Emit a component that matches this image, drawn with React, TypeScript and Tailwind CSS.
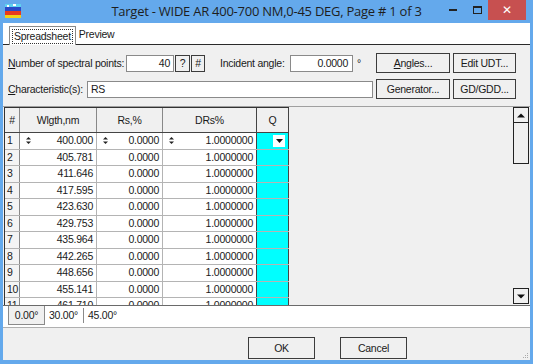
import { ReactNode } from "react";

const rows = [
  "400.000", "405.781", "411.646", "417.595", "423.630", "429.753",
  "435.964", "442.265", "448.656", "455.141", "461.710",
];

function Btn({ children, className = "" }: { children: ReactNode; className?: string }) {
  return (
    <div className={`h-[20px] flex items-center justify-center border border-[#3c3c3c] bg-[#f0f0f0] text-[#1a1a1a] whitespace-nowrap ${className}`}>
      {children}
    </div>
  );
}

function Spin() {
  return (
    <svg width="5" height="9" viewBox="0 0 5 9" className="shrink-0">
      <path d="M0 3.5 L2.5 1 L5 3.5 Z" fill="#222" />
      <path d="M0 5.5 L2.5 8 L5 5.5 Z" fill="#222" />
    </svg>
  );
}

function Arrow({ up }: { up?: boolean }) {
  return (
    <svg width="8" height="5" viewBox="0 0 8 5">
      <path d={up ? "M0 4.5 L4 0.5 L8 4.5 Z" : "M0 0.5 L4 4.5 L8 0.5 Z"} fill="#111" />
    </svg>
  );
}

export default function App() {
  return (
    <div className="w-[533px] h-[364px] bg-[#64a9ec] flex flex-col px-[3px] pb-[4px] font-['Liberation_Sans',Arial,sans-serif] text-[10.5px] tracking-[-0.25px] leading-[13px] text-[#1a1a1a] overflow-hidden">
      {/* title bar */}
      <div className="h-[23px] flex items-center relative shrink-0">
        <svg width="16" height="14" viewBox="0 0 16 14" className="ml-[2px] mt-[-2px]">
          <rect x="0" y="0" width="16" height="3" fill="#5fd0f0" />
          <rect x="2" y="1" width="2" height="2" fill="#fff" />
          <rect x="8" y="0" width="3" height="2" fill="#fff" />
          <rect x="0" y="3" width="16" height="4" fill="#2a49c8" />
          <rect x="0" y="7" width="16" height="4" fill="#e83a1e" />
          <rect x="0" y="11" width="16" height="3" fill="#f2d21a" />
        </svg>
        <div className="absolute left-0 right-0 top-[2px] text-center font-['Open_Sans',sans-serif] text-[13px] tracking-[-0.25px] text-[#1e1e1e] leading-[18px] pointer-events-none">
          Target - WIDE AR 400-700 NM,0-45 DEG, Page # 1 of 3
        </div>
        <div className="ml-auto mr-[4px] flex items-start self-start h-[20px]">
          <div className="w-[26px] h-[20px] flex items-center justify-center">
            <div className="w-[8px] h-[2px] bg-[#222]" />
          </div>
          <div className="w-[22px] h-[20px] flex items-center justify-center">
            <div className="w-[9px] h-[8px] border border-[#222] border-t-2" />
          </div>
          <div className="w-[38px] h-[20px] bg-[#c75050] flex items-center justify-center text-white text-[12px] font-bold font-['DejaVu_Sans',sans-serif]">
            ✕
          </div>
        </div>
      </div>

      <div className="flex-1 bg-[#f0f0f0] flex flex-col">
        {/* page tabs */}
        <div className="h-[22px] bg-white border-b border-[#2a2a2a] flex items-end shrink-0 whitespace-nowrap">
          <div className="ml-[6px] px-[2px] h-[19px] border border-b-0 border-[#8a8a8a] bg-white flex items-center justify-center relative top-[1px]">
            <span className="border border-dotted border-[#333] px-[1px] leading-[13px]">Spreadsheet</span>
          </div>
          <div className="ml-[3px] h-[19px] flex items-center">Preview</div>
        </div>

        {/* row 1 */}
        <div className="flex items-center mt-[8px] h-[20px] pl-[5px] whitespace-nowrap">
          <div className="w-[118px]"><u>N</u>umber of spectral points:</div>
          <div className="w-[48px] h-[17px] bg-white border border-[#8a8a8a] flex items-center justify-end pr-[3px]">40</div>
          <Btn className="ml-[1px] w-[15px] !h-[17px]">?</Btn>
          <Btn className="ml-[1px] w-[14px] !h-[17px]">#</Btn>
          <div className="ml-[15px] w-[70px]">Incident angle:</div>
          <div className="w-[63px] h-[17px] bg-white border border-[#8a8a8a] flex items-center justify-end pr-[4px]">0.0000</div>
          <div className="w-[23px] pl-[4px]">°</div>
          <Btn className="w-[74px]"><span><u>A</u>ngles...</span></Btn>
          <Btn className="ml-[3px] w-[63px]">Edit UDT...</Btn>
        </div>

        {/* row 2 */}
        <div className="flex items-center mt-[6px] h-[20px] pl-[5px] whitespace-nowrap">
          <div className="w-[79px]"><u>C</u>haracteristic(s):</div>
          <div className="w-[286px] h-[17px] bg-white border border-[#8a8a8a] flex items-center pl-[3px]">RS</div>
          <Btn className="ml-[3px] w-[74px]">Generator...</Btn>
          <Btn className="ml-[3px] w-[63px]">GD/GDD...</Btn>
        </div>

        {/* grid */}
        <div className="mt-[7px] h-[199px] border-t border-[#a0a0a0] flex shrink-0">
          <div className="flex-1 overflow-hidden pl-[1px]">
            <div className="w-[285px] border-l border-t border-[#333]">
              <div className="flex h-[25px] bg-[#f0f0f0] border-b border-[#444]">
                <div className="w-[15px] flex items-center justify-center border-r border-[#888]">#</div>
                <div className="w-[77px] flex items-center justify-center border-r border-[#888]">Wlgth,nm</div>
                <div className="w-[66px] flex items-center justify-center border-r border-[#888]">Rs,%</div>
                <div className="w-[94px] flex items-center justify-center border-r border-[#444]">DRs%</div>
                <div className="w-[32px] flex items-center justify-center border-r border-[#444]">Q</div>
              </div>
              {rows.map((w, i) => (
                <div key={i} className="flex h-[16.5px] border-b border-[#b4b4b4]">
                  <div className="w-[15px] bg-[#f4f4f4] flex items-center pl-[2px] border-r border-[#888]">{i + 1}</div>
                  <div className="w-[77px] bg-white flex items-center justify-end pr-[3px] border-r border-[#b4b4b4] relative">
                    {i === 0 && <div className="absolute left-[6px] top-[3px]"><Spin /></div>}
                    {w}
                  </div>
                  <div className="w-[66px] bg-white flex items-center justify-end pr-[3px] border-r border-[#b4b4b4] relative">
                    {i === 0 && <div className="absolute left-[6px] top-[3px]"><Spin /></div>}
                    0.0000
                  </div>
                  <div className="w-[94px] bg-white flex items-center justify-end pr-[3px] border-r border-[#444] relative">
                    {i === 0 && <div className="absolute left-[6px] top-[3px]"><Spin /></div>}
                    1.0000000
                  </div>
                  <div className="w-[32px] bg-[#00ffff] border-r border-[#444] flex items-center justify-end pr-[3px]">
                    {i === 0 && (
                      <div className="w-[12px] h-[12px] bg-white flex items-center justify-center">
                        <svg width="7" height="4" viewBox="0 0 7 4"><path d="M0 0 L3.5 4 L7 0 Z" fill="#111" /></svg>
                      </div>
                    )}
                  </div>
                </div>
              ))}
            </div>
          </div>
          {/* scrollbar */}
          <div className="w-[16px] mr-[1px] flex flex-col bg-[#f0f0f0]">
            <div className="h-[16px] border border-[#222] bg-[#f0f0f0] flex items-center justify-center"><Arrow up /></div>
            <div className="h-[41px] border border-t-0 border-[#222] bg-[#f0f0f0]" />
            <div className="flex-1" />
            <div className="h-[16px] border border-[#222] bg-[#f0f0f0] flex items-center justify-center mb-[1px]"><Arrow /></div>
          </div>
        </div>

        {/* angle tabs */}
        <div className="h-[23px] bg-white border-t border-[#6a6a6a] border-b border-b-[#b0b0b0] flex items-start shrink-0 whitespace-nowrap">
          <div className="ml-[5px] w-[37px] h-[19px] bg-[#f0f0f0] border border-t-0 border-[#8a8a8a] flex items-center justify-center">0.00°</div>
          <div className="ml-[4px] h-[19px] flex items-center">30.00°</div>
          <div className="ml-[5px] mt-[2px] h-[15px] border-l border-[#8a8a8a]" />
          <div className="ml-[4px] h-[19px] flex items-center">45.00°</div>
        </div>

        {/* bottom buttons */}
        <div className="flex-1 relative">
          <div className="flex mt-[9px] ml-[245px]">
            <Btn className="w-[67px] !h-[22px]">OK</Btn>
            <Btn className="ml-[25px] w-[67px] !h-[22px]">Cancel</Btn>
          </div>
          <div className="absolute right-[2px] bottom-[2px] grid grid-cols-3 gap-[1px]">
            <div className="w-[1px] h-[1px]" /><div className="w-[1px] h-[1px]" /><div className="w-[1px] h-[1px] bg-[#aaa]" />
            <div className="w-[1px] h-[1px]" /><div className="w-[1px] h-[1px] bg-[#aaa]" /><div className="w-[1px] h-[1px] bg-[#aaa]" />
            <div className="w-[1px] h-[1px] bg-[#aaa]" /><div className="w-[1px] h-[1px] bg-[#aaa]" /><div className="w-[1px] h-[1px] bg-[#aaa]" />
          </div>
        </div>
      </div>
    </div>
  );
}
